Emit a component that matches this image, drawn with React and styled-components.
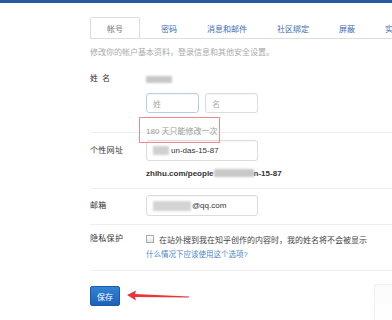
import React from 'react';
import styled, { createGlobalStyle } from 'styled-components';

const Global = createGlobalStyle`
  html, body {
    margin: 0;
    padding: 0;
    background: #fff;
    font-family: "Liberation Sans", "Noto Sans CJK SC", sans-serif;
  }
`;

const TopBar = styled.div`
  height: 3px;
  background: #235c9f;
`;

const Page = styled.div`
  padding-left: 90px;
  width: 302px;
`;

const Tabs = styled.div`
  display: flex;
  margin-top: 14px;
  height: 21px;
  border-bottom: 1px solid #dedede;
  white-space: nowrap;
  overflow: hidden;
`;

const Tab = styled.div`
  display: flex;
  align-items: center;
  padding: 0 ${p => (p.$active ? '16px' : '14px')};
  margin-right: ${p => (p.$active ? '6px' : '0')};
  font-size: 8px;
  color: ${p => (p.$active ? '#777' : '#3a6db3')};
  background: #fff;
  border: 1px solid ${p => (p.$active ? '#dedede' : 'transparent')};
  border-bottom: none;
  border-radius: 2px 2px 0 0;
  margin-bottom: -1px;
`;

const Desc = styled.p`
  margin: 8px 0 0;
  font-size: 8px;
  line-height: 12px;
  color: #aaa;
`;

const Section = styled.div`
  display: grid;
  grid-template-columns: 56px 1fr;
  align-items: start;
  padding: ${p => p.$pad || '8px 0 8px'};
  border-bottom: 1px solid #eee;
`;

const Label = styled.div`
  font-size: 8px;
  color: #333;
  line-height: ${p => p.$lh || '12px'};
  letter-spacing: ${p => (p.$spread ? '4px' : '0.3px')};
  white-space: nowrap;
`;

const Field = styled.div`
  display: flex;
  flex-direction: column;
`;

const NameLine = styled.div`
  height: 12px;
  display: flex;
  align-items: center;
`;

const Blur = styled.span`
  display: inline-block;
  width: ${p => p.$w}px;
  height: ${p => p.$h || 8}px;
  background: ${p => p.$c || '#c4c4c4'};
  filter: blur(1.2px);
  vertical-align: middle;
  margin-right: ${p => p.$mr || 0}px;
`;

const InputRow = styled.div`
  display: flex;
  gap: 6px;
  margin-top: 8px;
`;

const Input = styled.div`
  box-sizing: border-box;
  width: ${p => p.$w}px;
  height: ${p => p.$h || 20}px;
  border: 1px solid ${p => (p.$focus ? '#b9cdea' : '#dcdcdc')};
  border-radius: 3px;
  display: flex;
  align-items: center;
  padding-left: 6px;
  font-size: 8px;
  color: ${p => (p.$ph ? '#aaa' : '#333')};
  box-shadow: inset 0 1px 1px rgba(0, 0, 0, 0.04);
  white-space: nowrap;
  overflow: hidden;
`;

const Note = styled.div`
  position: relative;
  box-sizing: border-box;
  margin: 4px 0 -11px -7px;
  width: 81px;
  height: 26px;
  border: 1px solid #ec8a8f;
  padding-left: 6px;
  display: flex;
  align-items: center;
  font-size: 8px;
  color: #999;
  white-space: nowrap;
`;

const UrlLine = styled.div`
  margin-top: 6px;
  height: 12px;
  display: flex;
  align-items: center;
  font-size: 8px;
  font-weight: bold;
  color: #333;
  white-space: nowrap;
`;

const CheckLine = styled.div`
  display: flex;
  align-items: center;
  height: 12px;
  gap: 5px;
  font-size: 8px;
  color: #444;
  white-space: nowrap;
`;

const Check = styled.span`
  box-sizing: border-box;
  width: 8px;
  height: 8px;
  border: 1px solid #aaa;
  background: linear-gradient(#fff, #e6e6e6);
`;

const Link = styled.a`
  margin-top: 4px;
  line-height: 12px;
  font-size: 7.5px;
  color: #4a86c8;
  text-decoration: none;
`;

const Actions = styled.div`
  display: flex;
  align-items: center;
  margin-top: 15px;
  gap: 7px;
`;

const SaveButton = styled.button`
  width: 30px;
  height: 20px;
  padding: 0;
  border: 1px solid #1b5aa8;
  border-radius: 2px;
  background: linear-gradient(#3382d6, #1b61b7);
  color: #fff;
  font-family: "Noto Sans CJK SC", sans-serif;
  font-size: 8px;
`;

const Corner = styled.div`
  position: fixed;
  right: 0;
  top: 284px;
  width: 17px;
  height: 36px;
  border: 1px solid #f0f0f0;
  border-right: none;
  border-radius: 3px 0 0 0;
  background: linear-gradient(#fbfbfb, #fff);
`;

const Arrow = () => (
  <svg width="62" height="12" viewBox="0 0 62 12">
    <path d="M0 5 L9 0.5 L8 4 L62 6.5 L62 7.5 L8 7 L9 10.5 Z" fill="#e8363b" />
  </svg>
);

export default function App() {
  return (
    <>
      <Global />
      <TopBar />
      <Page>
        <Tabs>
          <Tab $active>帐号</Tab>
          <Tab>密码</Tab>
          <Tab>消息和邮件</Tab>
          <Tab>社区绑定</Tab>
          <Tab>屏蔽</Tab>
          <Tab>实验室</Tab>
        </Tabs>
        <Desc>修改你的帐户基本资料，登录信息和其他安全设置。</Desc>

        <Section $pad="14px 0 0">
          <Label $spread>姓名</Label>
          <Field>
            <NameLine>
              <Blur $w={26} $h={7} $c="#c8c8c8" />
            </NameLine>
            <InputRow>
              <Input $w={53} $focus $ph>姓</Input>
              <Input $w={53} $ph>名</Input>
            </InputRow>
            <Note>180 天只能修改一次</Note>
          </Field>
        </Section>

        <Section $pad="7px 0 9px">
          <Label $lh="21px">个性网址</Label>
          <Field>
            <Input $w={112} $h={21}>
              <Blur $w={16} $h={9} $c="#d0d0d0" $mr={2} />
              un-das-15-87
            </Input>
            <UrlLine>
              zhihu.com/people
              <Blur $w={40} $h={8} $c="#c8c8c8" />
              n-15-87
            </UrlLine>
          </Field>
        </Section>

        <Section $pad="6px 0 8px">
          <Label $lh="21px">邮箱</Label>
          <Field>
            <Input $w={112} $h={21}>
              <Blur $w={38} $h={10} $c="#d4d4d4" $mr={1} />
              @qq.com
            </Input>
          </Field>
        </Section>

        <Section $pad="8px 0 9px">
          <Label>隐私保护</Label>
          <Field>
            <CheckLine>
              <Check />
              在站外搜到我在知乎创作的内容时，我的姓名将不会被显示
            </CheckLine>
            <Link href="#">什么情况下应该使用这个选项?</Link>
          </Field>
        </Section>

        <Actions>
          <SaveButton>保存</SaveButton>
          <Arrow />
        </Actions>
      </Page>
      <Corner />
    </>
  );
}
